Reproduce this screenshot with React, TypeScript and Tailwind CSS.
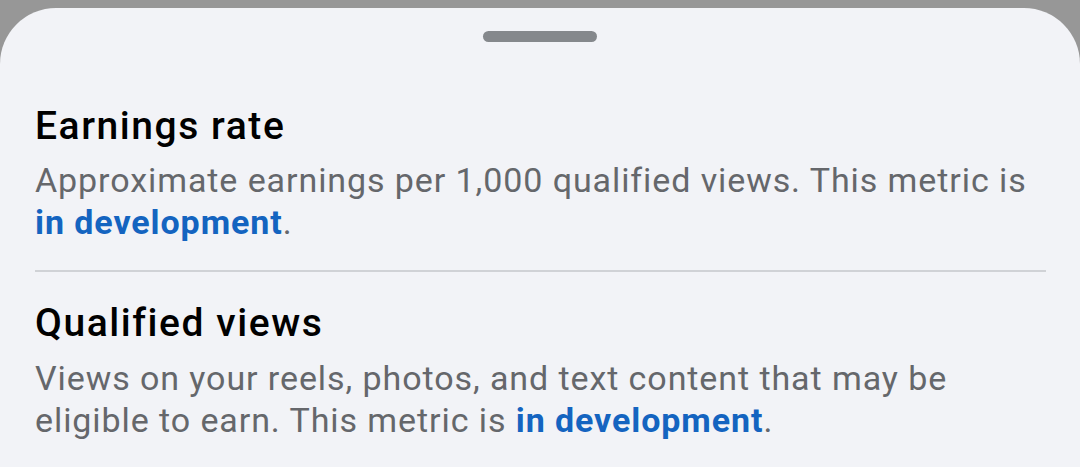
export default function App() {
  return (
    <div className="h-[467px] w-[1080px] overflow-hidden bg-[#979797] pt-[8px] font-['Roboto',sans-serif]">
      <div className="h-full rounded-t-[56px] bg-[#f2f3f7] px-[35px]">
        <div className="flex justify-center pt-[23px]">
          <div className="h-[11px] w-[114px] rounded-full bg-[#85888c]" />
        </div>
        <section className="pt-[61px] pb-[27px]">
          <h2 className="text-[39px] font-medium leading-[46px] tracking-[0.04em] text-black">Earnings rate</h2>
          <p className="mt-[10px] text-[34px] leading-[42px] tracking-[0.027em] text-[#65676b]">
            Approximate earnings per 1,000 qualified views. This metric is{" "}
            <a className="font-bold text-[#1464c0]">in development</a>.
          </p>
        </section>
        <div className="mr-[-1px] h-[2px] bg-[#d0d2d6]" />
        <section className="pt-[28px]">
          <h2 className="text-[39px] font-medium leading-[46px] tracking-[0.04em] text-black">Qualified views</h2>
          <p className="mt-[11px] text-[34px] leading-[42px] tracking-[0.027em] text-[#65676b]">
            Views on your reels, photos, and text content that may be eligible to earn. This metric is{" "}
            <a className="font-bold text-[#1464c0]">in development</a>.
          </p>
        </section>
      </div>
    </div>
  );
}
